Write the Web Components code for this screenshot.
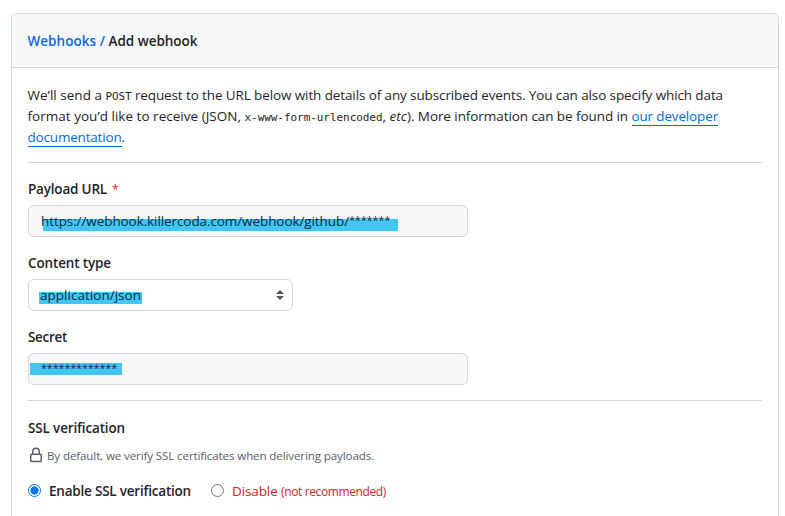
<!DOCTYPE html>
<html lang="en"><head><meta charset="utf-8"><title>Add webhook</title>
<style>
html,body{margin:0;height:516px;overflow:hidden;background:#fff}
body{font:13.5px/21px "Open Sans","Noto Sans",sans-serif;color:#1f2328}
</style></head><body>
<webhook-page></webhook-page>
<script>
const define=(name,html,setup)=>customElements.define(name,class extends HTMLElement{
  connectedCallback(){
    if(this.shadowRoot)return;
    this.attachShadow({mode:'open'}).innerHTML=html;
    if(setup)setup(this);
  }
});
// A run of text tracked to a given advance width.
define('text-run','<style>:host{display:inline-block;white-space:pre;flex:none}</style><slot></slot>',el=>{
  const w=+el.getAttribute('w'),n=el.textContent.length;
  if(w&&n){
    el.style.letterSpacing=(w-el.getBoundingClientRect().width)/n+'px';
    el.style.width=w+'px';
  }
});
define('panel-card',`<style>
:host{display:block;box-sizing:border-box;width:768px;height:520px;margin:13px 0 0 11px;border:1px solid #d0d7de;border-radius:6px;overflow:hidden}
header{box-sizing:border-box;height:54px;padding:17px 16px 0 15.5px;background:#f6f8fa;border-bottom:1px solid #d0d7de;font-weight:600;line-height:21px}
main{padding:17px 16px 0}
</style><header><slot name="title"></slot></header><main><slot></slot></main>`);
define('rule-line','<style>:host{display:block;height:1px;background:#d0d7de}</style>');
define('form-field',`<style>
:host{display:block;height:74px}
.label{font-weight:600;height:20px;padding-top:1px;display:flex}
.box{box-sizing:border-box;height:32px;width:440px;margin-top:6px;border:1px solid #d0d7de;border-radius:6px;background:#f6f8fa;display:flex;align-items:center;padding:0 12px}
:host([select]) .box{width:265px;background:#fff;padding:0 8px 0 11px;justify-content:space-between}
svg{display:none}:host([select]) svg{display:block}
</style><div class="label"><slot name="label"></slot></div><div class="box"><slot></slot>
<svg width="8" height="10" viewBox="0 0 8 10" fill="#4f5863"><path d="M4 0L8 4.1H0zM4 10L0 5.9h8z"/></svg></div>`);
// Marker strip behind a value.
define('marked-value',`<style>
:host{display:block;position:relative;color:#102a3d;line-height:20px}
i{position:absolute;left:var(--x);top:var(--y);width:var(--w);height:12px;background:#41c6f5}
span{position:relative;display:flex}
</style><i></i><span><slot></slot></span>`);
define('lock-icon',`<style>:host{display:block;flex:none;width:14px;height:16px}svg{display:block}</style>
<svg width="14" height="16" viewBox="0 0 14 16" fill="none" stroke="#57606a" stroke-width="1.5"><rect x="1.75" y="7.25" width="10.5" height="7.2" rx=".8"/><path d="M3.75 7V4.4a3.25 3.25 0 0 1 6.5 0V7"/></svg>`);
define('radio-dot',`<style>
:host{display:block;flex:none;box-sizing:border-box;width:13px;height:13px;margin-bottom:2px;border:1px solid #767676;border-radius:50%;background:#fff}
:host([checked]){border-color:#0075ff;background:radial-gradient(circle,#0075ff 3.8px,#fff 4.4px)}
</style>`);
define('webhook-page',`<style>
:host{display:block}
a{color:#0969da;text-decoration:none}
.p{height:63px;margin-left:-.5px}.p>div{display:flex;height:21px}
code{font:11px/23px "DejaVu Sans Mono",monospace}
.u{box-shadow:inset 0 -1px #0969da;height:20px}
.req{color:#cf222e;margin-left:5px;font-size:12px;font-weight:400}
.stars{font-size:11px;line-height:18px}
.note{display:flex;align-items:center;height:18px;margin-top:7px;font-size:11.6px;line-height:18px;color:#57606a;padding-left:1px}
.note lock-icon{margin-top:-1px}
.note text-run{margin:1px 0 0 4px}
.radios{display:flex;align-items:center;margin-top:17px;height:20px}
.red{color:#cf222e}
</style>
<panel-card>
<div slot="title" style="display:flex"><a><text-run w="81">Webhooks / </text-run></a><text-run w="89">Add webhook</text-run></div>
<div class="p">
<div><text-run w="78">We’ll send a </text-run><code><text-run w="26">POST</text-run></code><text-run w="591.5"> request to the URL below with details of any subscribed events. You can also specify which data</text-run></div>
<div><text-run w="217">format you’d like to receive (JSON, </text-run><code><text-run w="138">x-www-form-urlencoded</text-run></code><text-run w="7">, </text-run><i><text-run w="17.5">etc</text-run></i><text-run w="224.5">). More information can be found in </text-run><a class="u"><text-run w="86.5">our developer</text-run></a></div>
<div><a class="u"><text-run w="94">documentation</text-run></a><text-run w="3">.</text-run></div>
</div>
<rule-line style="margin:14px 0 15px"></rule-line>
<form-field><div slot="label" style="display:flex"><text-run w="79">Payload URL</text-run><span class="req">*</span></div><marked-value style="--x:2px;--y:8px;--w:355px"><text-run w="308">https://webhook.killercoda.com/webhook/github/</text-run><text-run class="stars" w="41">*******</text-run></marked-value></form-field>
<form-field select><text-run slot="label" w="83">Content type</text-run><marked-value style="--x:-1px;--y:7px;--w:103px"><text-run w="101">application/json</text-run></marked-value></form-field>
<form-field><text-run slot="label" w="39">Secret</text-run><marked-value style="--x:-11px;--y:3px;--w:92px"><text-run class="stars" style="line-height:16px;height:18px" w="76">*************</text-run></marked-value></form-field>
<rule-line></rule-line>
<div style="margin-top:17px;font-weight:600"><text-run w="97">SSL verification</text-run></div>
<div class="note"><lock-icon></lock-icon><text-run w="327">By default, we verify SSL certificates when delivering payloads.</text-run></div>
<div class="radios"><radio-dot checked></radio-dot><text-run style="font-weight:600;margin-left:8px" w="142">Enable SSL verification</text-run><radio-dot style="margin-left:20px"></radio-dot><text-run class="red" style="margin-left:8px" w="49">Disable </text-run><text-run class="red" style="font-size:12px" w="105">(not recommended)</text-run></div>
</panel-card>`);
</script></body></html>
